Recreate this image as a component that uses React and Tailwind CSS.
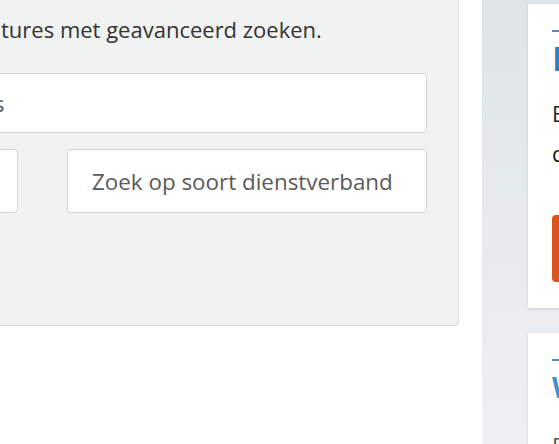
import { useState } from 'react';

const font = { fontFamily: '"Open Sans", "Liberation Sans", sans-serif' };

const inputClass =
  'block w-full px-[24px] bg-white border border-[#d3d4d4] rounded text-[22.4px] text-[#333] placeholder:text-[#5a5a5a] outline-none';

function SearchPanel() {
  const [keyword, setKeyword] = useState('');
  const [category, setCategory] = useState('');
  const [contract, setContract] = useState('');

  return (
    <div className="ml-[-374px] w-[833px] shrink-0">
      <div className="h-[326px] bg-[#f1f2f2] border border-t-0 border-[#dcdddd] rounded-b px-[31px] pt-[15px]">
        {/* the start of the sentence runs off the left edge of the window */}
        <p className="flex whitespace-nowrap text-[22px] leading-[28px] text-[#333]">
          <span className="w-[343px] shrink-0 flex justify-end">Vind snel de juiste vaca</span>
          <span>tures met geavanceerd zoeken.</span>
        </p>
        <input
          type="text"
          value={keyword}
          onChange={(e) => setKeyword(e.target.value)}
          placeholder="Zoek op functienaam en plaats"
          className={`mt-[30px] h-[60px] ${inputClass}`}
        />
        <div className="mt-[16px] grid grid-cols-2 gap-[49px]">
          <input
            type="text"
            value={category}
            onChange={(e) => setCategory(e.target.value)}
            placeholder="Zoek op vakgebied"
            className={`h-[64px] ${inputClass}`}
          />
          <input
            type="text"
            value={contract}
            onChange={(e) => setContract(e.target.value)}
            placeholder="Zoek op soort dienstverband"
            className={`h-[64px] ${inputClass}`}
          />
        </div>
      </div>
    </div>
  );
}

function SideCard({ heading, headingClass, children, className }) {
  return (
    <div className={`w-[300px] bg-white shadow-[0_1px_3px_rgba(0,0,0,0.12)] pl-[24px] pt-[26px] whitespace-nowrap ${className}`}>
      <div className="w-[30px] h-[2px] bg-[#4a8fc9]" />
      <h3 className={`font-bold ${headingClass}`}>{heading}</h3>
      {children}
    </div>
  );
}

export default function App() {
  return (
    <div className="w-[559px] h-[444px] overflow-hidden bg-white flex" style={font}>
      <SearchPanel />
      <div className="ml-[23px] flex-1 bg-gradient-to-b from-[#dfe4e8] to-[#eef1f3] pl-[46px] pt-[4px]">
        <SideCard
          heading="Direct solliciteren"
          headingClass="mt-[6px] text-[34px] leading-[40px] text-[#2b7fc3]"
          className="h-[304px]"
        >
          <p className="mt-[15px] text-[22px] leading-[40px] text-[#222]">
            Eenvoudig je cv uploaden en
            <br />
            direct reageren op vacatures.
          </p>
          <button
            type="button"
            className="mt-[42px] h-[67px] px-[30px] rounded bg-[#d9541e] text-white text-[22px] font-semibold"
          >
            Upload je cv
          </button>
        </SideCard>
        <SideCard
          heading="Werkgevers"
          headingClass="mt-[8px] text-[28px] leading-[36px] text-[#3f8fd2]"
          className="mt-[25px] h-[200px]"
        >
          <p className="mt-[20px] text-[22px] leading-[40px] text-[#555]">
            Plaats uw vacature
          </p>
        </SideCard>
      </div>
    </div>
  );
}
